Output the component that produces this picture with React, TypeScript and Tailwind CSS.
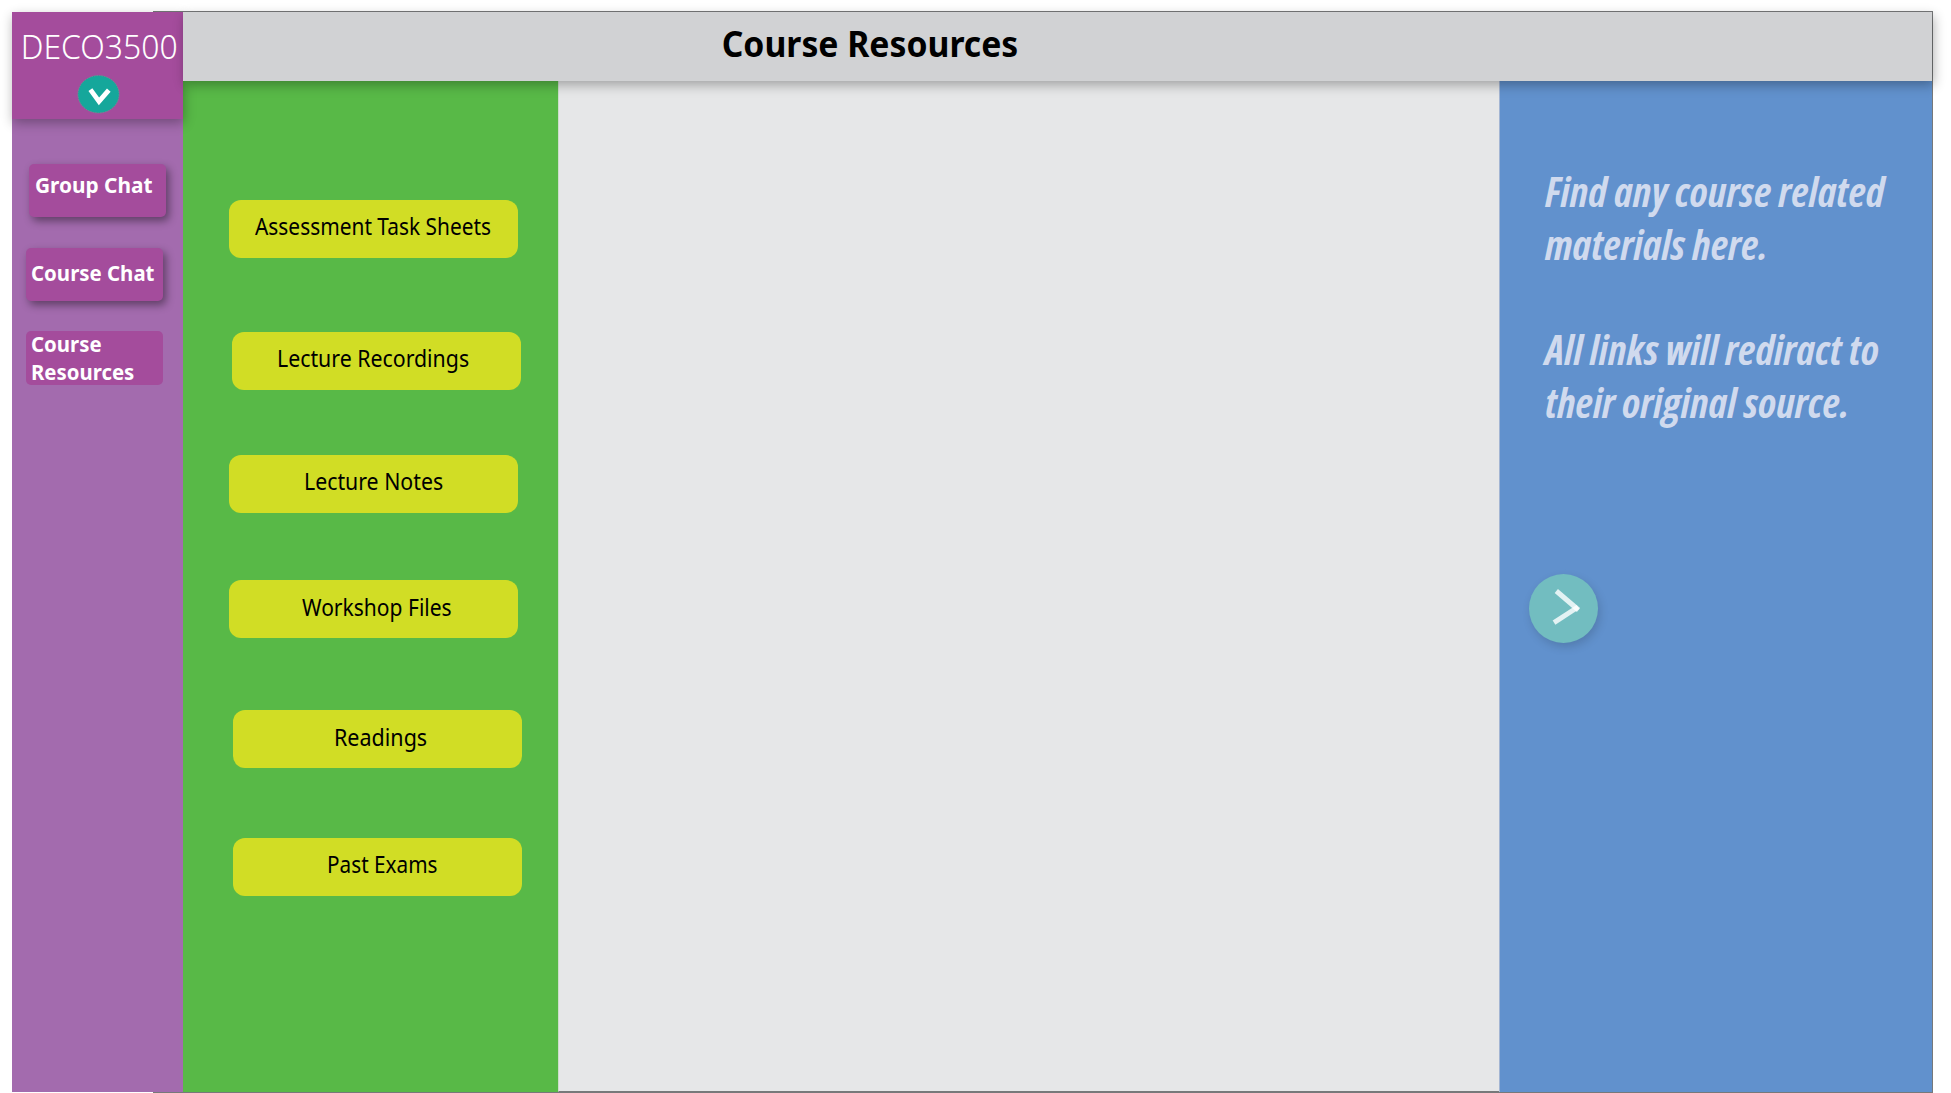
const resources = [
  { label: "Assessment Task Sheets", box: "ml-[46px] mt-[119px] pl-[25.5px]", text: "scale-x-[0.889]" },
  { label: "Lecture Recordings", box: "ml-[49px] mt-[74px] pl-[44.7px]", text: "scale-x-[0.907]" },
  { label: "Lecture Notes", box: "ml-[46px] mt-[65px] pl-[74.7px]", text: "scale-x-[0.906]" },
  { label: "Workshop Files", box: "ml-[46px] mt-[67px] pl-[73px] pt-px", text: "scale-x-[0.895]" },
  { label: "Readings", box: "ml-[50px] mt-[72px] pl-[100.7px] pt-px", text: "scale-x-[0.915]" },
  { label: "Past Exams", box: "ml-[50px] mt-[70px] pl-[94.2px]", text: "scale-x-[0.883]" },
];

function Sidebar() {
  return (
    <nav className="relative z-10 flex h-[1080px] w-[171px] shrink-0 flex-col bg-[#a36bae] text-white">
      <div className="h-[107px] shrink-0 bg-[#a44c9c] pt-1 shadow-[1px_4px_11px_rgba(0,0,0,0.3)]">
        <div className="origin-left scale-x-[0.967] whitespace-nowrap pl-[9px] pt-px text-[33px] font-light leading-[60px]">DECO3500</div>
        <svg className="-mt-0.5 ml-[65px] block" width="43" height="39" viewBox="0 0 43 39">
          <ellipse cx="21.5" cy="19.3" rx="20.6" ry="18.7" fill="#15a79b" stroke="#6f8f93" strokeWidth="1" strokeDasharray="1.5 1" />
          <path d="M13.4 14.6 L22 26.4 L31.8 15.2" fill="none" stroke="#fff" strokeWidth="4.8" />
        </svg>
      </div>
      <button className="ml-[17px] mt-[45px] h-[53px] w-[137px] rounded-[5px] bg-[#a44c9c] pl-1.5 text-left shadow-[3px_4px_8px_rgba(0,0,0,0.42)]">
        <span className="-mt-[13px] block origin-left scale-x-[0.946] whitespace-nowrap text-[22px] font-bold leading-[40px]">Group Chat</span>
      </button>
      <button className="ml-[14px] mt-[31px] h-[53px] w-[137px] rounded-[5px] bg-[#a44c9c] pl-[5px] text-left shadow-[3px_4px_8px_rgba(0,0,0,0.42)]">
        <span className="-mt-[5px] block origin-left scale-x-[0.928] whitespace-nowrap text-[22px] font-bold leading-[48px]">Course Chat</span>
      </button>
      <button className="ml-[14px] mt-[30px] flex h-[54px] w-[137px] flex-col items-start rounded-[5px] bg-[#a44c9c] pl-[5px] text-left">
        <span className="-mt-[2.5px] block origin-left scale-x-[0.926] text-[22px] font-bold leading-[28px]">Course Resources</span>
      </button>
    </nav>
  );
}

function ResourceList() {
  return (
    <section className="flex w-[375px] shrink-0 flex-col items-start bg-[#58b947]">
      {resources.map((r) => (
        <button key={r.label} className={`flex h-[58px] w-[289px] shrink-0 items-start rounded-xl bg-[#d1dd25] text-left ${r.box}`}>
          <span className={`block origin-left whitespace-nowrap text-[23.5px] leading-[52px] text-black ${r.text}`}>{r.label}</span>
        </button>
      ))}
    </section>
  );
}

function InfoPanel() {
  return (
    <aside className="flex flex-1 flex-col border-l border-[#a3b5d3] bg-[#6191cd] pl-[45px] pt-[84px] font-['Open_Sans','Noto_Sans',sans-serif]">
      <div className="whitespace-nowrap text-[41px] font-bold italic leading-[52.75px] tracking-[0.04px] text-[#d0daee] [font-stretch:75%]">
        <p>Find any course related</p>
        <p>materials here.</p>
        <p className="mt-[52.75px]">All links will rediract to</p>
        <p>their original source.</p>
      </div>
      <button className="-ml-4 mt-[145.5px] size-[69px] rounded-full bg-[#72bdc0] shadow-[2px_4px_10px_rgba(0,0,0,0.15)]">
        <svg width="69" height="69" viewBox="0 0 69 69" stroke="#fff" strokeOpacity="0.8" strokeWidth="5">
          <path d="M27.3 17 L49.5 36" />
          <path d="M25 48.6 L49 33" />
        </svg>
      </button>
    </aside>
  );
}

export default function App() {
  return (
    <div className="flex h-[1093px] w-[1951px] items-start overflow-hidden bg-white pl-3 font-['Noto_Sans','Open_Sans',sans-serif]">
      <div className="pt-3">
        <Sidebar />
      </div>
      <main className="-ml-[30px] mt-[11px] flex h-[1082px] w-[1780px] flex-col border border-[#77797a] pl-[29px]">
        <header className="relative z-20 h-[69px] shrink-0 bg-[#d1d2d4] shadow-[2px_4px_11px_rgba(0,0,0,0.3)]">
          <h1 className="origin-left scale-x-[0.95] whitespace-nowrap pl-[567px] text-[35.5px] font-bold leading-[63px] text-black">Course Resources</h1>
        </header>
        <div className="flex flex-1">
          <ResourceList />
          <section className="w-[941px] shrink-0 border-b border-l border-b-[#77797a] border-l-[#cddccb] bg-[#e6e7e8]" />
          <InfoPanel />
        </div>
      </main>
    </div>
  );
}
